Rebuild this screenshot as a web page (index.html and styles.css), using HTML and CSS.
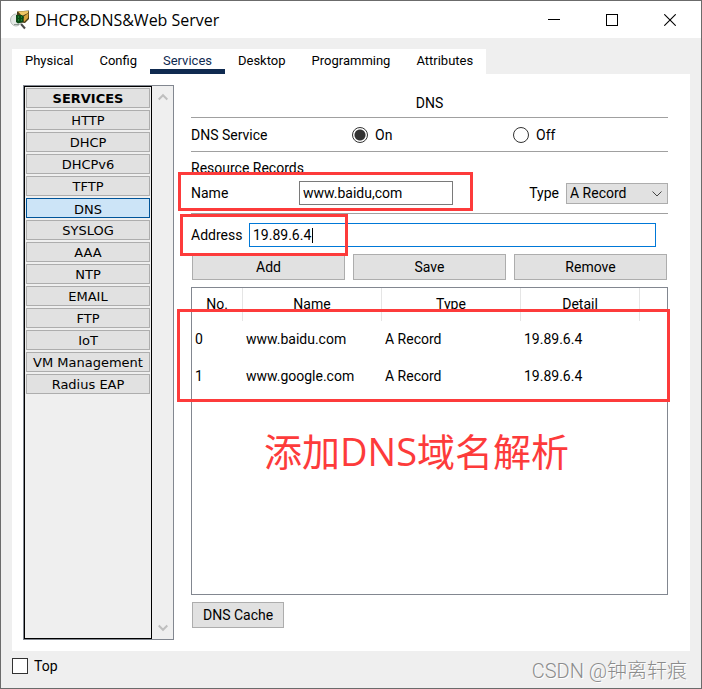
FILE: index.html
```html
<!DOCTYPE html>
<html lang="en">
<head>
<meta charset="utf-8">
<title>DHCP&amp;DNS&amp;Web Server</title>
<link rel="stylesheet" href="styles.css">
</head>
<body>
<div class="window">
  <header class="titlebar">
    <svg class="app-icon" width="20" height="20" viewBox="0 0 20 20" aria-hidden="true">
      <ellipse cx="6" cy="10" rx="5.5" ry="6" fill="#e4e9e6" stroke="#b5bdb9"/>
      <path d="M7 1.5 19 .5 19 9 15 13 7 12Z" fill="#4a3c16"/>
      <path d="M8 1.5 18.5 1 18 3 12 6Z" fill="#f0c765"/>
      <path d="M13 7 18.5 3 18 8 14 12Z" fill="#d9a33c"/>
      <path d="M6 5 12 5 14 7 13 12 8 13.5 6 12Z" fill="#0c4a16"/>
      <path d="M8 7h1M11 7h1M8 10h1M11 10h1" stroke="#35b548"/>
      <path d="M4 14.5 9 14.5" stroke="#8f9692"/>
      <path d="M11 14 15 18.5" stroke="#4b4b4b" stroke-width="2"/>
    </svg>
    <h1 class="title">DHCP&amp;DNS&amp;Web Server</h1>
    <button class="win-button" aria-label="Minimize"><svg width="12" height="12" viewBox="0 0 12 12"><path d="M0 5.5H12" stroke="#000"/></svg></button>
    <button class="win-button" aria-label="Maximize"><svg width="12" height="12" viewBox="0 0 12 12"><rect x=".5" y=".5" width="11" height="11" fill="none" stroke="#000"/></svg></button>
    <button class="win-button" aria-label="Close"><svg width="12" height="12" viewBox="0 0 12 12"><path d="M.3.3 11.7 11.7M11.7.3.3 11.7" stroke="#000" stroke-width="1.1"/></svg></button>
  </header>

  <nav class="tabs">
    <button class="tab">Physical</button>
    <button class="tab">Config</button>
    <button class="tab tab-active">Services</button>
    <button class="tab">Desktop</button>
    <button class="tab">Programming</button>
    <button class="tab">Attributes</button>
  </nav>

  <main class="panel">
    <aside class="sidebar">
      <div class="service-list">
        <button class="service service-heading">SERVICES</button>
        <button class="service">HTTP</button>
        <button class="service">DHCP</button>
        <button class="service">DHCPv6</button>
        <button class="service">TFTP</button>
        <button class="service service-active">DNS</button>
        <button class="service">SYSLOG</button>
        <button class="service">AAA</button>
        <button class="service">NTP</button>
        <button class="service">EMAIL</button>
        <button class="service">FTP</button>
        <button class="service">IoT</button>
        <button class="service">VM Management</button>
        <button class="service">Radius EAP</button>
      </div>
      <div class="scrollbar">
        <button class="scroll-button" aria-label="Scroll up"><svg width="10" height="8" viewBox="0 0 10 8"><path d="M.7 6.5 5 2.2 9.3 6.5" fill="none" stroke="#bfbfbf" stroke-width="2"/></svg></button>
        <button class="scroll-button" aria-label="Scroll down"><svg width="10" height="8" viewBox="0 0 10 8"><path d="M.7 1.5 5 5.8 9.3 1.5" fill="none" stroke="#bfbfbf" stroke-width="2"/></svg></button>
      </div>
    </aside>

    <section class="content">
      <h2 class="heading">DNS</h2>

      <div class="service-row">
        <span>DNS Service</span>
        <label class="option"><input class="radio" type="radio" name="dns" checked>On</label>
        <label class="option"><input class="radio" type="radio" name="dns">Off</label>
      </div>

      <div class="subheading">Resource Records</div>
      <div class="name-row">
        <label class="name-label" for="name">Name</label>
        <input class="field name-field" id="name" type="text" value="www.baidu,com">
        <label class="type-label" for="type">Type</label>
        <span class="select-box">
          <select class="select" id="type"><option>A Record</option></select>
          <svg class="select-arrow" width="10" height="6" viewBox="0 0 10 6"><path d="M.5.5 5 5 9.5.5" fill="none" stroke="#444"/></svg>
        </span>
        <span class="mark mark-name"></span>
      </div>

      <div class="address-row">
        <label class="address-label" for="address">Address</label>
        <span class="address-box">
          <input class="field address-field" id="address" type="text" value="19.89.6.4">
          <span class="caret"></span>
        </span>
        <span class="mark mark-address"></span>
      </div>

      <div class="actions">
        <button class="button">Add</button>
        <button class="button">Save</button>
        <button class="button">Remove</button>
      </div>

      <div class="records">
        <table class="table">
          <colgroup><col class="col-no"><col class="col-name"><col class="col-type"><col class="col-detail"><col></colgroup>
          <thead>
            <tr><th>No.</th><th>Name</th><th>Type</th><th>Detail</th><th></th></tr>
          </thead>
          <tbody>
            <tr><td>0</td><td>www.baidu.com</td><td>A Record</td><td>19.89.6.4</td><td></td></tr>
            <tr><td>1</td><td>www.google.com</td><td>A Record</td><td>19.89.6.4</td><td></td></tr>
          </tbody>
        </table>
        <span class="mark mark-records"></span>
        <p class="note" lang="zh">添加DNS域名解析</p>
      </div>

      <button class="button cache-button">DNS Cache</button>
    </section>
  </main>

  <footer class="footer">
    <label class="top-option"><input class="checkbox" type="checkbox">Top</label>
    <span class="watermark" lang="zh">CSDN @钟离轩痕</span>
  </footer>
</div>
</body>
</html>
```
FILE: styles.css
```css
* {
  box-sizing: border-box;
}

body {
  margin: 0;
  font: 14px/18px Roboto, "Liberation Sans", sans-serif;
  color: #000;
}

button,
input,
select {
  font: inherit;
  color: inherit;
  margin: 0;
}

button {
  padding: 0;
  border: 0;
  background: none;
}

.window {
  display: flex;
  flex-direction: column;
  min-height: 100vh;
  border: 1px solid #6b6b6b;
  background: #efefef;
}

.titlebar {
  display: flex;
  align-items: center;
  height: 37px;
  padding: 0 2px 0 9px;
  background: #fff;
}

.app-icon {
  margin-right: 5px;
}

.title {
  flex: 1;
  margin: 0;
  font: 16px/22px "Open Sans", "Noto Sans", sans-serif;
}

.win-button {
  display: flex;
  align-items: center;
  justify-content: center;
  width: 58px;
  height: 36px;
}

.tabs {
  display: flex;
  align-self: flex-start;
  margin: 11px 0 0 11px;
  background: #fff;
}

.tab {
  height: 25px;
  padding: 2px 13px 0;
  border-bottom: 5px solid transparent;
  font-size: 13px;
  line-height: 20px;
}

.tab-active {
  border-color: #0f2a50;
  color: #0f2a50;
}

.panel {
  display: flex;
  flex: 1;
  gap: 17px;
  margin: 0 11px;
  padding: 11px 22px 11px 11px;
  background: #fff;
}

.sidebar {
  display: flex;
  flex: none;
  width: 151px;
  border: 1px solid #828790;
  background: #efefef;
}

.service-list {
  display: flex;
  flex: 1;
  flex-direction: column;
  gap: 2px;
  padding: 1px;
  border: 1px solid #000;
  font: 13px/18px "DejaVu Sans", sans-serif;
}

.service {
  height: 20px;
  padding-top: 1px;
  border: 1px solid #adadad;
  background: #e1e1e1;
}

.service-heading {
  font-weight: bold;
}

.service-active {
  padding-top: 2px;
  border-color: #005499;
  background: #cce4f7;
}

.scrollbar {
  display: flex;
  flex-direction: column;
  justify-content: space-between;
  width: 21px;
}

.scroll-button {
  display: flex;
  align-items: center;
  justify-content: center;
  height: 22px;
}

.content {
  display: flex;
  flex: 1;
  flex-direction: column;
  min-width: 0;
}

.heading {
  margin: 0;
  padding: 9px 0 5px;
  border-bottom: 1px solid #a0a0a0;
  font-size: 14px;
  font-weight: normal;
  line-height: 18px;
  text-align: center;
}

.service-row {
  display: grid;
  grid-template-columns: repeat(3, 1fr);
  gap: 6px;
  align-items: center;
  height: 34px;
  border-bottom: 1px solid #a0a0a0;
}

.option {
  display: flex;
  align-items: center;
  gap: 7px;
}

.radio {
  appearance: none;
  width: 16px;
  height: 16px;
  border: 1px solid #333;
  border-radius: 50%;
  background: #fff;
}

.radio:checked {
  background: radial-gradient(circle, #333 5px, #fff 6px);
}

.subheading {
  padding-top: 7px;
}

.name-row {
  position: relative;
  display: flex;
  align-items: center;
  height: 37px;
  padding-bottom: 4px;
  border-bottom: 1px solid #a0a0a0;
}

.name-label {
  width: 108px;
}

.field {
  height: 24px;
  padding: 0 3px;
  border: 1px solid #7a7a7a;
  border-radius: 0;
  background: #fff;
  outline: 0;
}

.name-field {
  width: 154px;
}

.type-label {
  margin-left: auto;
  padding-right: 7px;
}

.select-box {
  position: relative;
  display: flex;
}

.select {
  appearance: none;
  width: 102px;
  height: 21px;
  padding: 0 3px;
  border: 1px solid #adadad;
  border-radius: 0;
  background: #e1e1e1;
}

.select-arrow {
  position: absolute;
  top: 8px;
  right: 6px;
}

.address-row {
  position: relative;
  display: flex;
  align-items: center;
  height: 40px;
  padding: 2px 12px 0 0;
}

.address-label {
  width: 58px;
}

.address-box {
  position: relative;
  display: flex;
  flex: 1;
}

.address-field {
  flex: 1;
  min-width: 0;
  border-color: #0078d7;
}

.caret {
  position: absolute;
  top: 5px;
  left: 63px;
  width: 1px;
  height: 15px;
  background: #000;
}

.mark {
  position: absolute;
  z-index: 1;
  border: 3px solid #fd3b3b;
  pointer-events: none;
}

.mark-name {
  top: -5px;
  left: -13px;
  width: 295px;
  height: 39px;
}

.mark-address {
  top: 0;
  left: -11px;
  width: 168px;
  height: 42px;
}

.mark-records {
  top: 21px;
  right: -3px;
  left: -15px;
  height: 93px;
}

.actions {
  display: grid;
  grid-template-columns: repeat(3, 1fr);
  gap: 8px;
  padding: 0 1px;
}

.button {
  height: 26px;
  border: 1px solid #adadad;
  background: #e1e1e1;
}

.records {
  position: relative;
  flex: 1;
  margin: 7px 0;
  border: 1px solid #828790;
}

.table {
  width: 100%;
  table-layout: fixed;
  border-spacing: 0;
}

.col-no {
  width: 51px;
}

.col-name,
.col-type {
  width: 139px;
}

.col-detail {
  width: 119px;
}

.table th {
  height: 33px;
  padding: 0 0 1px;
  border-right: 1px solid #e5e5e5;
  font-weight: normal;
}

.table th:last-child {
  border-right: 0;
}

.table td {
  height: 37px;
  padding: 0 3px 1px;
}

.note {
  margin: 31px 0 0;
  padding-right: 26px;
  font: 38px/50px "Open Sans", "Noto Sans CJK SC", sans-serif;
  text-align: center;
  color: #fd3b3b;
}

.cache-button {
  align-self: flex-start;
  margin: 0 1px 12px;
  padding: 0 10px;
}

.footer {
  display: flex;
  align-items: center;
  justify-content: space-between;
  height: 37px;
  padding: 0 14px 0 11px;
}

.top-option {
  display: flex;
  align-items: center;
  gap: 6px;
  padding-bottom: 7px;
}

.checkbox {
  appearance: none;
  width: 16px;
  height: 16px;
  border: 1px solid #333;
  background: #fff;
}

.watermark {
  padding-top: 2px;
  font: 300 20px/28px Roboto, "Noto Sans CJK SC", sans-serif;
  color: #8c8c8c;
  text-shadow: 1px 1px 0 #fff;
}
```
